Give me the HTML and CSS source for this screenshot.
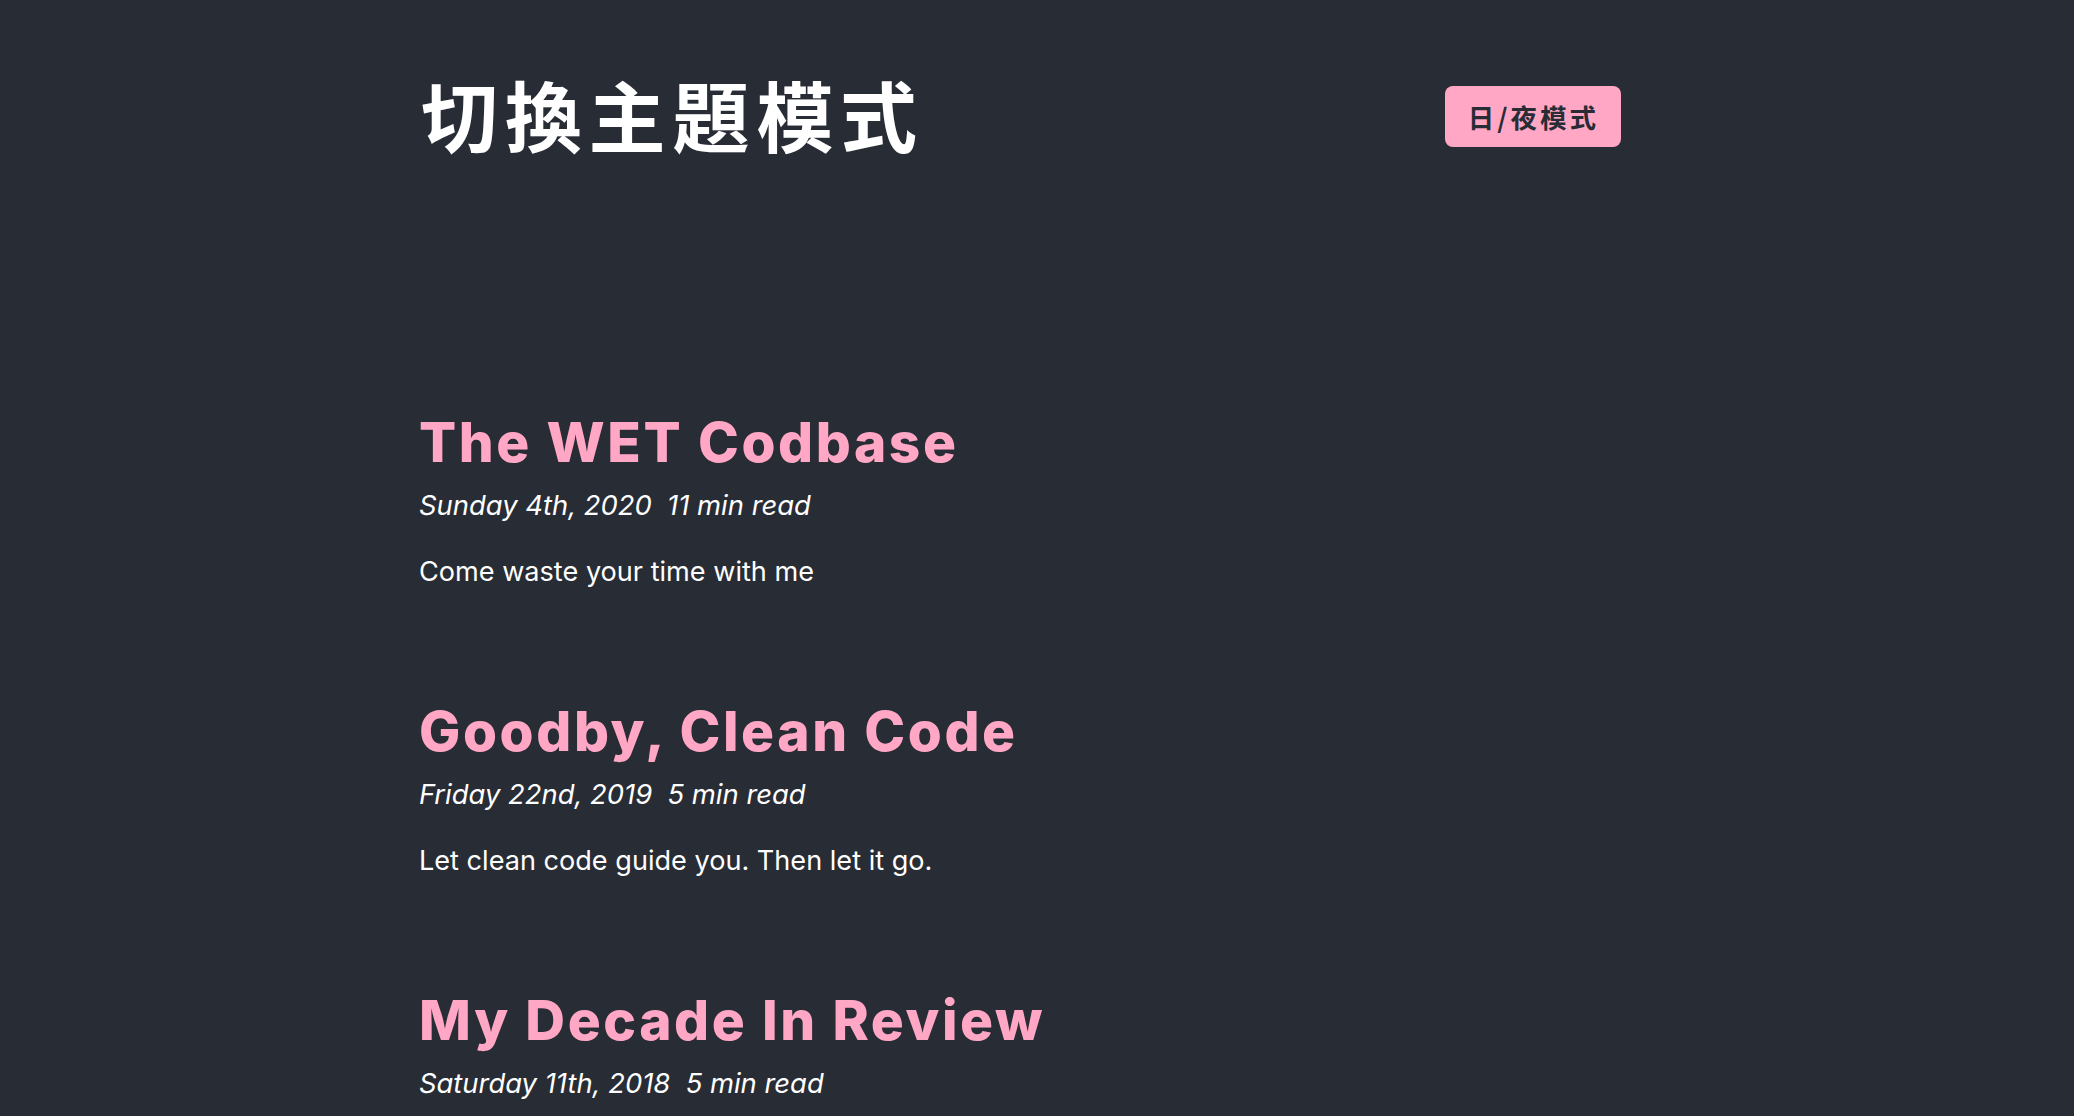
FILE: index.html
```html
<!DOCTYPE html>
<html lang="zh-Hant">
<head>
<meta charset="utf-8">
<title>切換主題模式</title>
<link rel="stylesheet" href="styles.css">
</head>
<body>
<div class="wrap">
  <header class="header">
    <h1 class="site-title">切換主題模式</h1>
    <button class="toggle" type="button">日/夜模式</button>
  </header>
  <main class="posts">
    <article class="post">
      <h2 class="post-title">The WET Codbase</h2>
      <p class="post-meta">Sunday 4th, 2020&nbsp;&nbsp;11 min read</p>
      <p class="post-desc">Come waste your time with me</p>
    </article>
    <article class="post">
      <h2 class="post-title">Goodby, Clean Code</h2>
      <p class="post-meta">Friday 22nd, 2019&nbsp;&nbsp;5 min read</p>
      <p class="post-desc">Let clean code guide you. Then let it go.</p>
    </article>
    <article class="post">
      <h2 class="post-title">My Decade In Review</h2>
      <p class="post-meta">Saturday 11th, 2018&nbsp;&nbsp;5 min read</p>
    </article>
  </main>
</div>
</body>
</html>
```

FILE: styles.css
```css
html, body {
  margin: 0;
  padding: 0;
  background: #282c35;
  height: 100%;
  overflow: hidden;
}

body {
  font-family: Inter, "Noto Sans", "Noto Sans CJK TC", sans-serif;
  color: #ffffff;
}

.wrap {
  width: 1202px;
  margin-left: calc(50% - 618px);
}

.header {
  display: flex;
  justify-content: space-between;
  align-items: center;
  height: 100px;
  margin-top: 63px;
}

.site-title {
  margin: 0;
  font-family: "Noto Sans CJK TC", "Noto Sans CJK SC", sans-serif;
  font-size: 77px;
  font-weight: 700;
  line-height: 1;
  color: #ffffff;
  letter-spacing: 6.8px;
  padding-left: 2px;
}

.toggle {
  font-family: "Noto Sans CJK TC", "Noto Sans CJK SC", sans-serif;
  font-size: 26.5px;
  font-weight: 700;
  letter-spacing: 3px;
  color: #282c35;
  background: #ffa7c4;
  border: none;
  border-radius: 8px;
  height: 61px;
  width: 176px;
  padding: 0 0 0 1px;
  line-height: 61px;
  margin-top: 7px;
}

.posts {
  margin-top: 249px;
}

.post {
  margin-bottom: 113px;
}

.post-title {
  margin: 0;
  font-family: Inter, sans-serif;
  font-size: 55px;
  font-weight: 800;
  line-height: 60px;
  letter-spacing: 0.047em;
  color: #ffa7c4;
}

.post-meta {
  margin: 18px 0 0;
  font-size: 27.4px;
  line-height: 30px;
  font-style: italic;
}

.post-desc {
  margin: 36px 0 0;
  font-size: 27.1px;
  line-height: 32px;
}
```
